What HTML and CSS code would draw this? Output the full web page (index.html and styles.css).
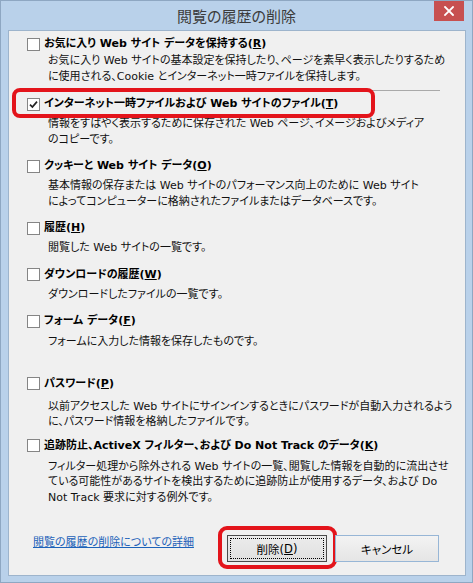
FILE: index.html
```html
<!DOCTYPE html>
<html lang="ja">
<head>
<meta charset="utf-8">
<title>閲覧の履歴の削除</title>
<link rel="stylesheet" href="styles.css">
</head>
<body>
<div class="window">
  <div class="titlebar">
    <span class="title">閲覧の履歴の削除</span>
    <span class="close"><svg width="10" height="10" viewBox="0 0 10 10"><path d="M1 1L9 9M9 1L1 9" stroke="#fff" stroke-width="1.8" stroke-linecap="square"/></svg></span>
  </div>
  <div class="content">
    <div class="item item-1">
      <div class="opt"><span class="cb"></span><span>お気に入り Web サイト データを保持する(<u>R</u>)</span></div>
      <p class="desc desc-1">お気に入り Web サイトの基本設定を保持したり、ページを素早く表示したりするため<br>に使用される、Cookie とインターネット一時ファイルを保持します。</p>
    </div>
    <div class="sep"></div>
    <div class="item item-2">
      <div class="opt"><span class="cb"><svg width="11" height="11" viewBox="0 0 11 11"><path d="M2 5.6L4.4 8L9 2.6" fill="none" stroke="#222" stroke-width="1.7"/></svg></span><span>インターネット一時ファイルおよび Web サイトのファイル(<u>T</u>)</span><span class="ring ring-row"></span></div>
      <p class="desc">情報をすばやく表示するために保存された Web ページ、イメージおよびメディア<br>のコピーです。</p>
    </div>
    <div class="item">
      <div class="opt"><span class="cb"></span><span>クッキーと Web サイト データ(<u>O</u>)</span></div>
      <p class="desc">基本情報の保存または Web サイトのパフォーマンス向上のために Web サイト<br>によってコンピューターに格納されたファイルまたはデータベースです。</p>
    </div>
    <div class="item">
      <div class="opt"><span class="cb"></span><span>履歴(<u>H</u>)</span></div>
      <p class="desc">閲覧した Web サイトの一覧です。</p>
    </div>
    <div class="item">
      <div class="opt"><span class="cb"></span><span>ダウンロードの履歴(<u>W</u>)</span></div>
      <p class="desc">ダウンロードしたファイルの一覧です。</p>
    </div>
    <div class="item">
      <div class="opt"><span class="cb"></span><span>フォーム データ(<u>F</u>)</span></div>
      <p class="desc desc-5">フォームに入力した情報を保存したものです。</p>
    </div>
    <div class="item item-7">
      <div class="opt"><span class="cb"></span><span>パスワード(<u>P</u>)</span></div>
      <p class="desc desc-7">以前アクセスした Web サイトにサインインするときにパスワードが自動入力されるよう<br>に、パスワード情報を格納したファイルです。</p>
    </div>
    <div class="item item-8">
      <div class="opt"><span class="cb"></span><span>追跡防止、ActiveX フィルター、および Do Not Track のデータ(<u>K</u>)</span></div>
      <p class="desc desc-5">フィルター処理から除外される Web サイトの一覧、閲覧した情報を自動的に流出させ<br>ている可能性があるサイトを検出するために追跡防止が使用するデータ、および Do<br>Not Track 要求に対する例外です。</p>
    </div>
    <div class="footer">
      <a class="link" href="#">閲覧の履歴の削除についての詳細</a>
      <div class="buttons">
        <div class="btn btn-default"><span class="focus">削除(<u>D</u>)</span><span class="ring ring-btn"></span></div>
        <div class="btn btn-cancel">キャンセル</div>
      </div>
    </div>
  </div>
</div>
</body>
</html>
```
FILE: styles.css
```css
* { box-sizing: border-box; }
html, body { margin: 0; padding: 0; }
body {
  width: 473px;
  height: 583px;
  overflow: hidden;
  background: #b9d1ea;
  font-family: "DejaVu Sans", "Noto Sans CJK JP", sans-serif;
  font-feature-settings: "palt";
  font-size: 11px;
  color: #000;
}
.window {
  width: 473px;
  height: 583px;
  display: flex;
  flex-direction: column;
  background: #b9d1ea;
  border: 1px solid #8ea7c2;
}
.titlebar {
  position: relative;
  height: 29px;
  flex: none;
  display: flex;
  align-items: center;
  justify-content: center;
}
.title {
  font-family: "Noto Sans CJK JP", sans-serif;
  font-size: 15px;
  color: #3c3c3c;
  line-height: 20px;
}
.close {
  position: absolute;
  top: 0;
  right: 8px;
  width: 30px;
  height: 20px;
  background: #c75050;
  display: flex;
  align-items: center;
  justify-content: center;
}
.close svg { display: block; }
.content {
  flex: 1;
  margin: 0 6px 6px 7px;
  background: #f0f0f0;
  border: 1px solid #9db4cc;
  padding: 5px 26px 13px 18px;
  display: flex;
  flex-direction: column;
}
.item { margin-top: 11px; }
.item-1 { margin-top: 0; }
.item-2 { margin-top: 5px; }
.item-7 { margin-top: 26px; }
.item-8 { margin-top: 8px; }
.opt {
  position: relative;
  display: flex;
  align-items: center;
  gap: 4px;
  height: 16px;
  line-height: 16px;
  font-weight: 700;
  white-space: nowrap;
}
.cb {
  flex: none;
  width: 13px;
  height: 13px;
  border: 1px solid #858585;
  background: #fff;
  display: flex;
  align-items: center;
  justify-content: center;
}
.cb svg { display: block; }
.desc {
  margin: 4px 0 0 21px;
  line-height: 15.5px;
  white-space: nowrap;
  color: #111;
}
.desc-1 { margin-top: 1px; }
.desc-5 { margin-top: 5px; }
.desc-7 { margin-top: 7px; }
.sep {
  height: 1px;
  margin: 6px 0 0 8px;
  width: 405px;
  background: #a9a9a9;
}
.ring {
  position: absolute;
  border: 4px solid #e3141b;
  border-radius: 8px;
  pointer-events: none;
}
.ring-row { left: -15px; top: -8px; width: 363px; height: 30px; }
.footer {
  margin-top: auto;
  display: flex;
  align-items: flex-start;
  padding-left: 6px;
}
.link {
  color: #1c62b9;
  text-decoration: underline;
  line-height: 16px;
}
.buttons {
  margin-left: auto;
  display: flex;
  gap: 8px;
}
.btn {
  position: relative;
  height: 27px;
  display: flex;
  align-items: center;
  justify-content: center;
  font-size: 11.5px;
  color: #000;
}
.btn-default {
  width: 100px;
  border: 1px solid #4a4a4a;
  background: linear-gradient(#ececec, #e0e0e0);
  padding: 2px;
}
.focus {
  width: 100%;
  height: 100%;
  border: 1px dotted #000;
  display: flex;
  align-items: center;
  justify-content: center;
}
.btn-cancel {
  width: 104px;
  border: 1px solid #97b6d6;
  background: linear-gradient(#f3f3f3, #e5e5e5);
}
.ring-btn { left: -10px; top: -10px; width: 119px; height: 43px; border-radius: 9px; }
```
